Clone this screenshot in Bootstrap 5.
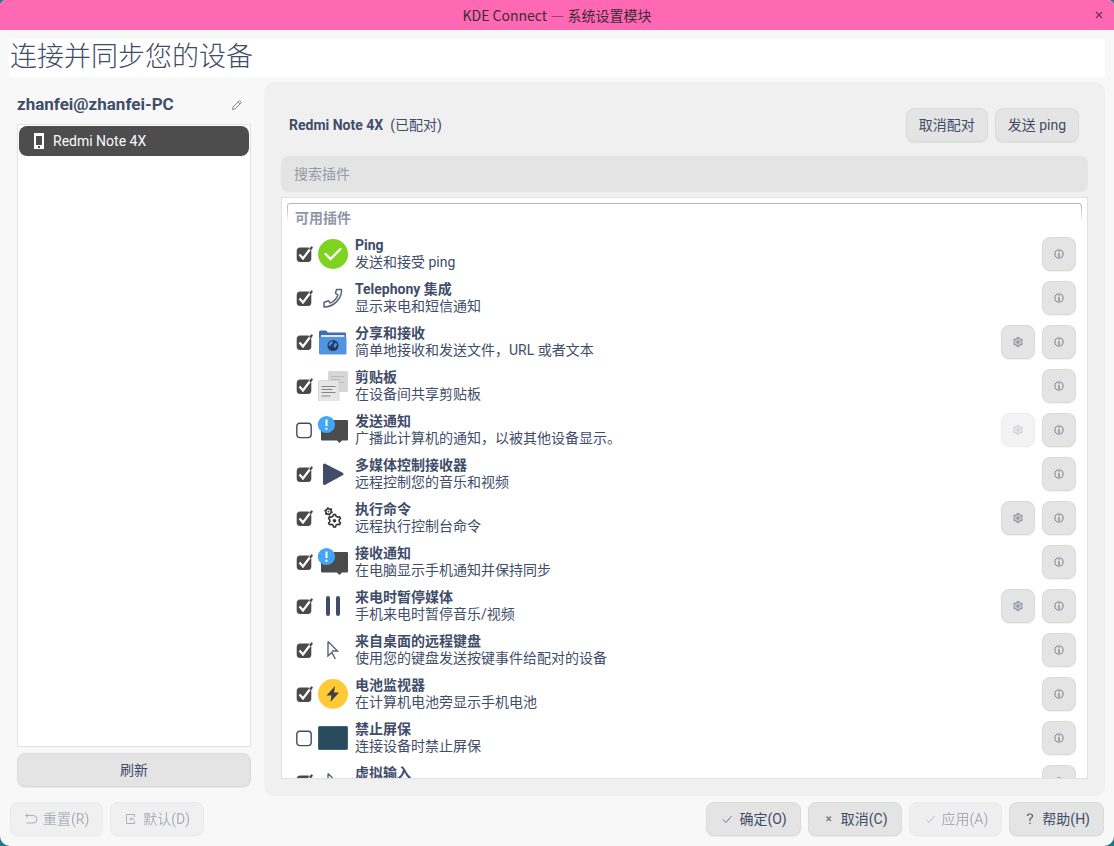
<!DOCTYPE html>
<html lang="zh-CN">
<head>
<meta charset="utf-8">
<meta name="viewport" content="width=device-width, initial-scale=1">
<title>KDE Connect — 系统设置模块</title>
<link href="https://cdn.jsdelivr.net/npm/bootstrap@5.3.0/dist/css/bootstrap.min.css" rel="stylesheet">
<style>
:root { --ink: #414d68; }
body { font-family: Roboto, "Noto Sans CJK SC", sans-serif; font-size: 14px; line-height: 17px; color: var(--ink); background: #1a7a8c; }
.window { background: #f8f8f8; border-radius: 6px 6px 10px 10px; overflow: hidden; }
.titlebar { background: #ff69b3; height: 30px; color: #3a2b36; font-family: "Noto Sans CJK SC", sans-serif; }
.close-btn { right: 10px; top: 10px; width: 10px; height: 10px; color: #6b3355; line-height: 0; }
.page-title { background: #fff; height: 38px; margin: 9px 9px 5px; padding-left: 1px; font: 300 27px/32px "Noto Sans CJK SC", sans-serif; flex: none; }
.workspace { min-height: 0; padding: 0 9px; gap: 13px; }
.side { width: 242px; padding: 7px 0 9px 8px; }
.host { font-size: 17px; line-height: 30px; font-weight: 700; }
.device-list { background: #fff; border: 1px solid #e2e2e2; padding: 1px; margin-top: 5px; margin-bottom: 6px; }
.device { background: #4d4d4d; color: #fcfcfc; border-radius: 8px; height: 30px; padding: 0 14px; gap: 8px; text-decoration: none; }
.panel { background: #f0f0f0; border-radius: 10px; padding: 26px 17px 17px; min-width: 0; }
.panel-head { padding: 0 9px 0 8px; gap: 7px; }
.kbtn { --bs-btn-padding-y: 0; --bs-btn-padding-x: 12px; --bs-btn-font-size: 14px; --bs-btn-line-height: 17px; --bs-btn-color: var(--ink); --bs-btn-bg: #e4e4e4; --bs-btn-border-color: #dadada; --bs-btn-border-radius: 8px; --bs-btn-hover-bg: #ececec; --bs-btn-hover-border-color: #ccc; --bs-btn-hover-color: var(--ink); --bs-btn-disabled-color: var(--ink); --bs-btn-disabled-bg: #e4e4e4; --bs-btn-disabled-border-color: #d6d6d6; --bs-btn-disabled-opacity: .42;
  height: 34px; display: inline-flex; align-items: center; justify-content: center; gap: 5px; box-shadow: 0 1px 1px rgba(0,0,0,.06); white-space: nowrap; }
.square { --bs-btn-padding-x: 0; width: 34px; }
.btn-gap { gap: 7px; }
.search { height: 36px; margin-top: 14px; margin-bottom: 5px; flex: none; background: #e4e4e4; border: 0; border-radius: 8px; font-size: 14px; padding: 0 13px; color: var(--ink); }
.search::placeholder { color: #9699a5; }
.plugins { background: #fff; border: 1px solid #e0e0e0; padding: 5px 5px 0; overflow: hidden; }
.group-wrap { display: grid; }
.group-wrap > * { grid-area: 1 / 1; }
.group-frame { height: 29px; border: 1px solid #b4b7c1; border-bottom: 0; border-radius: 3px 3px 0 0; -webkit-mask: linear-gradient(#000 3px, transparent 20px); mask: linear-gradient(#000 3px, transparent 20px); }
.group-text { padding: 7px 8px 5px; font-weight: 700; color: #8f96a5; }
.plugin { height: 44px; padding: 0 6px 0 9px; }
.pic { width: 30px; height: 30px; margin: 0 7px 0 5px; flex: none; }
.texts { height: 34px; }
.tick { appearance: none; width: 17px; height: 17px; margin: 0; flex: none; background: url("data:image/svg+xml,%3Csvg xmlns='http://www.w3.org/2000/svg' viewBox='0 0 17 17'%3E%3Crect x='.8' y='1.2' width='14.4' height='14.4' rx='3' fill='none' stroke='%23414d68' stroke-width='1.4'/%3E%3C/svg%3E"); }
.tick:checked { background-image: url("data:image/svg+xml,%3Csvg xmlns='http://www.w3.org/2000/svg' viewBox='0 0 17 17'%3E%3Crect x='.7' y='1.5' width='14.6' height='14.6' rx='3.5' fill='%234a4a4a'/%3E%3Cpath d='M3.5 8.5 7 12.5 14.5 2.5' fill='none' stroke='%23fff' stroke-width='2.2'/%3E%3Cpath d='M14.500 3 15.700 1.500' stroke='%234a4a4a' stroke-width='2.2' stroke-linecap='round'/%3E%3C/svg%3E"); }
.footer { padding: 6px 10px 10px; }
.footer .kbtn { --bs-btn-padding-x: 13px; }
</style>
</head>
<body>
<svg class="d-none" xmlns="http://www.w3.org/2000/svg">
  <symbol id="i-info" viewBox="0 0 10 10"><circle cx="5" cy="5" r="4.1" fill="none" stroke="#7b8293"/><path d="M5 4.2V8M5 2.2v1.100" stroke="#6e7689" stroke-width="1.200"/></symbol>
  <symbol id="i-gear" viewBox="0 0 10 10"><path d="M3.700 1.800 4 .7h2l.3 1.100 1 .5 1.200-.3.900 1.600-.8.800v1.200l.8.800-.9 1.600-1.200-.3-1 .5L6 9.300H4l-.3-1.100-1-.5-1.200.3L.6 6.400l.8-.8V4.400L.6 3.600 1.500 2l1.200.3z" fill="#c3c6ce" stroke="#7b8293"/><circle cx="5" cy="5" r="1.500" fill="#8b91a0"/></symbol>
  <symbol id="i-ping" viewBox="0 0 30 30"><circle cx="15" cy="15" r="15" fill="#7ed321"/><path d="m7.500 15 5 5 10-10" fill="none" stroke="#fff" stroke-width="2.300" stroke-linecap="round"/></symbol>
  <symbol id="i-phone" viewBox="0 0 30 30"><path d="M18.500 6.500h5c.5 9-7.500 17.500-17.500 17.500v-4.500l4.500-1.700 1.700 2.300c4-1.500 6.500-4.500 7.800-8.300l-2.500-1.500z" fill="none" stroke="#59637a" stroke-width="1.500" stroke-linejoin="round"/></symbol>
  <symbol id="i-share" viewBox="0 0 30 30"><path d="M1 5q0-1.500 1.500-1.500H8l2 2h17q1 0 1 1V14H1z" fill="#3f6fb0"/><path d="M3 8h23.500v5H3z" fill="#dfe8f3"/><rect x="1" y="10" width="27.500" height="17.500" rx="1.500" fill="#5294e2"/><circle cx="15" cy="18.500" r="5.500" fill="#223a5c"/><path d="m11.500 15.500 2.500-1.500 1 1-1 2-1.500 1v1.500l-2-1zM16.500 16.500l2-.5.5 2-2 3-1.500-1.500z" fill="#5294e2"/></symbol>
  <symbol id="i-clip" viewBox="0 0 30 30"><rect x="10" width="20" height="21" rx="1.500" fill="#d6d6d6"/><path d="M13 5.500h13M13 8.500h9M19 11.500h7" stroke="#bcbcbc" stroke-width="1.200"/><rect x=".5" y="9.500" width="20.500" height="21" rx="1.500" fill="#e6e6e6" stroke="#cfcfcf" stroke-width=".8"/><path d="M3.500 15.500h14M3.500 18.500h11M3.500 21.500h14M3.500 25h9" stroke="#858585" stroke-width="1.200"/></symbol>
  <symbol id="i-note" viewBox="0 0 30 30"><path d="M4 5h25q1 0 1 1v18.500q0 1-1 1h-5L21.500 28 19 25.500H4q-1 0-1-1V6z" fill="#4b4b4b"/><circle cx="8.500" cy="9.500" r="8.600" fill="#42a5f5"/><path d="M8.500 4.500v6.500M8.500 12.700v2" stroke="#fff" stroke-width="2"/></symbol>
  <symbol id="i-play" viewBox="0 0 30 30"><path d="M6.500 6 24 15 6.500 24.500z" fill="#414d68" stroke="#414d68" stroke-width="3" stroke-linejoin="round"/></symbol>
  <symbol id="i-run" viewBox="0 0 30 30" fill="none" stroke="#2b2b2b"><circle cx="10.500" cy="8.500" r="2.700" stroke-width="1.400"/><circle cx="10.500" cy="8.500" r="3.700" stroke-width="1.300" stroke-dasharray="1.600 2.270"/><circle cx="10.500" cy="8.500" r=".5"/><path d="m15 13.200.5-1.700h2l.5 1.700 1.700 1 1.800-.5 1 1.800-1.300 1.200v2l1.300 1.300-1 1.700-1.800-.5-1.700 1-.5 1.800h-2l-.5-1.800-1.700-1-1.800.5-1-1.700 1.300-1.300v-2l-1.300-1.200 1-1.800 1.800.5z" stroke-width="1.500" stroke-linejoin="round"/><circle cx="16.500" cy="17.700" r="1.300" fill="#2b2b2b"/></symbol>
  <symbol id="i-pause" viewBox="0 0 30 30"><path d="M10 7v16M20 7v16" stroke="#414d68" stroke-width="4" stroke-linecap="round"/></symbol>
  <symbol id="i-cursor" viewBox="0 0 30 30"><path d="M10 6.500v14.500l3.800-3.500 3.500 6.500M10 6.500l9.500 9.500h-5.500" fill="none" stroke="#59637a" stroke-width="1.400"/></symbol>
  <symbol id="i-bolt" viewBox="0 0 30 30"><circle cx="15" cy="15" r="15" fill="#ffca35"/><path d="M17 7 8.500 16.500h5L12.500 23l8.500-9.500h-5z" fill="#3f3f3f"/></symbol>
  <symbol id="i-screen" viewBox="0 0 30 30"><rect x=".5" y="3.500" width="29" height="23" rx=".8" fill="#2a4b5e" stroke="#3a667d"/></symbol>
</svg>

<div class="window vh-100 d-flex flex-column">
  <header class="titlebar position-relative d-flex flex-shrink-0 align-items-center justify-content-center">
    KDE Connect — 系统设置模块
    <button class="close-btn btn border-0 p-0 position-absolute" type="button" aria-label="关闭"><svg width="10" height="10" viewBox="0 0 10 10"><path d="m2 2 6 6M8 2 2 8" stroke="currentColor" stroke-width="1.200"/></svg></button>
  </header>
  <h1 class="page-title">连接并同步您的设备</h1>

  <main class="workspace d-flex flex-grow-1">
    <section class="side d-flex flex-column flex-shrink-0">
      <div class="d-flex align-items-center justify-content-between">
        <h2 class="host m-0">zhanfei@zhanfei-PC</h2>
        <button class="btn border-0 p-0 me-2 lh-1" type="button" aria-label="重命名"><svg width="12" height="12" viewBox="0 0 12 12" fill="none" stroke="#848a99"><path d="m1.500 10.500.5-2.500 6.500-6.500 2 2L4 10zM7 3l2 2"/></svg></button>
      </div>
      <div class="device-list flex-grow-1">
        <a class="device d-flex align-items-center" href="#"><svg width="12" height="16" viewBox="0 0 12 16"><path fill="#fff" fill-rule="evenodd" d="M1 0h10v16H1zM3 3v9h6V3zM5 13v2h2v-2z"/></svg>Redmi Note 4X</a>
      </div>
      <button class="btn kbtn flex-shrink-0" type="button">刷新</button>
    </section>

    <section class="panel d-flex flex-column flex-grow-1">
      <div class="panel-head d-flex align-items-center">
        <strong>Redmi Note 4X</strong><span class="me-auto">(已配对)</span>
        <button class="btn kbtn" type="button">取消配对</button>
        <button class="btn kbtn" type="button">发送 ping</button>
      </div>
      <input class="form-control search" type="search" placeholder="搜索插件" aria-label="搜索插件">
      <div class="plugins flex-grow-1">
        <div class="group-wrap"><div class="group-frame"></div><div class="group-text">可用插件</div></div>
        <div id="rows"></div>
      </div>
    </section>
  </main>

  <footer class="footer d-flex btn-gap">
    <button class="btn kbtn" type="button" disabled><svg width="14" height="12" viewBox="0 0 14 12" fill="none" stroke="currentColor"><path d="M4 .5 1.500 2.500l2.500 2M1.500 2.500H9q4 0 4 3.800t-4 3.700H2.500"/></svg>重置(R)</button>
    <button class="btn kbtn me-auto" type="button" disabled><svg width="14" height="12" viewBox="0 0 14 12" fill="none" stroke="currentColor"><path d="M10.500 4V1.500h-8v9h8V8M10.500 6H5.500M7.500 4.500 6 6l1.500 1.500"/></svg>默认(D)</button>
    <button class="btn kbtn" type="button"><svg width="14" height="12" viewBox="0 0 14 12" fill="none" stroke="#6e7689"><path d="m3 6.500 3 3L11.500 3"/></svg>确定(O)</button>
    <button class="btn kbtn" type="button"><svg width="14" height="12" viewBox="0 0 14 12" fill="none" stroke="#6e7689" stroke-width="1.200"><path d="m4.500 3.500 4.500 4.500M9 3.500 4.500 8"/></svg>取消(C)</button>
    <button class="btn kbtn" type="button" disabled><svg width="14" height="12" viewBox="0 0 14 12" fill="none" stroke="#6e7689"><path d="m3 6.500 3 3L11.500 3"/></svg>应用(A)</button>
    <button class="btn kbtn" type="button"><svg width="14" height="12" viewBox="0 0 14 12" fill="none" stroke="#555" stroke-width="1.200"><path d="M4.500 3q0-2 2.500-2t2.500 2Q9.500 4.500 7 6v2M7 9.500V11"/></svg>帮助(H)</button>
  </footer>
</div>

<script src="https://cdn.jsdelivr.net/npm/bootstrap@5.3.0/dist/js/bootstrap.bundle.min.js"></script>
<script>
// icon, title, description, enabled, settings button: '' none, 'on', 'off'
const plugins = [
  ['ping', 'Ping', '发送和接受 ping', 1, ''],
  ['phone', 'Telephony 集成', '显示来电和短信通知', 1, ''],
  ['share', '分享和接收', '简单地接收和发送文件，URL 或者文本', 1, 'on'],
  ['clip', '剪贴板', '在设备间共享剪贴板', 1, ''],
  ['note', '发送通知', '广播此计算机的通知，以被其他设备显示。', 0, 'off'],
  ['play', '多媒体控制接收器', '远程控制您的音乐和视频', 1, ''],
  ['run', '执行命令', '远程执行控制台命令', 1, 'on'],
  ['note', '接收通知', '在电脑显示手机通知并保持同步', 1, ''],
  ['pause', '来电时暂停媒体', '手机来电时暂停音乐/视频', 1, 'on'],
  ['cursor', '来自桌面的远程键盘', '使用您的键盘发送按键事件给配对的设备', 1, ''],
  ['bolt', '电池监视器', '在计算机电池旁显示手机电池', 1, ''],
  ['screen', '禁止屏保', '连接设备时禁止屏保', 0, ''],
  ['cursor', '虚拟输入', '', 1, '']
];
const square = (icon, label, off) =>
  `<button class="btn kbtn square" type="button" aria-label="${label}"${off ? ' disabled' : ''}><svg width="10" height="10"><use href="#i-${icon}"/></svg></button>`;
document.getElementById('rows').innerHTML = plugins.map(([icon, title, desc, on, cfg], i) => `
  <div class="plugin d-flex align-items-center">
    <input class="tick" type="checkbox" id="p${i}"${on ? ' checked' : ''}>
    <svg class="pic"><use href="#i-${icon}"/></svg>
    <label class="texts flex-grow-1" for="p${i}"><strong class="d-block">${title}</strong>${desc}</label>
    <div class="d-flex btn-gap">${cfg ? square('gear', '设置', cfg === 'off') : ''}${square('info', '关于')}</div>
  </div>`).join('');
</script>
</body>
</html>
